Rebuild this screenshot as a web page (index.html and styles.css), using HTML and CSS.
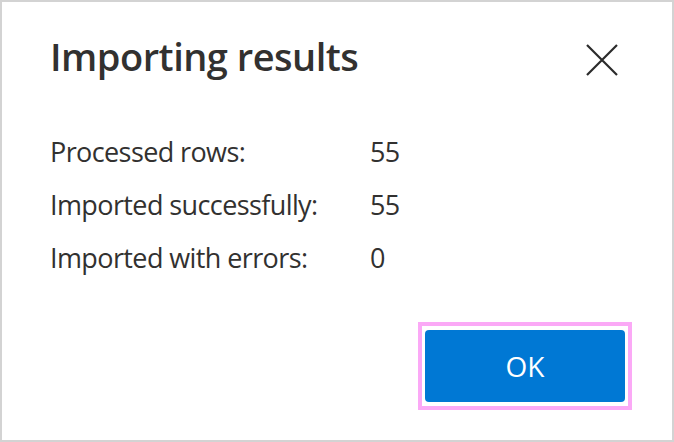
FILE: index.html
```html
<!DOCTYPE html>
<html lang="en">

<head>
    <meta charset="UTF-8">
    <meta name="viewport" content="width=device-width, initial-scale=1.0">
    <title>Importing results</title>
    <link rel="stylesheet" href="styles.css">
</head>

<body>
    <div class="dialog">
        <div class="header">
            <h2>Importing results</h2>
            <button class="close" aria-label="Close">
                <svg width="32" height="32" viewBox="0 0 32 32">
                    <path d="M1 1 L31 31 M31 1 L1 31" stroke="#2b2b2b" stroke-width="2.2" fill="none" />
                </svg>
            </button>
        </div>
        <div class="stats">
            <div class="label">Processed rows:</div>
            <div class="value">55</div>
            <div class="label">Imported successfully:</div>
            <div class="value">55</div>
            <div class="label">Imported with errors:</div>
            <div class="value">0</div>
        </div>
        <div class="footer">
            <div class="focus-ring">
                <button class="ok">OK</button>
            </div>
        </div>
    </div>
</body>

</html>
```

FILE: styles.css
```css
body {
    margin: 0;
    font-family: "Open Sans", "Noto Sans", sans-serif;
    color: #323130;
    background: white;
}

.dialog {
    width: 674px;
    height: 442px;
    box-sizing: border-box;
    border: 2px solid #d3d3d3;
    padding: 34px 40px 30px 48px;
    display: flex;
    flex-direction: column;
}

.header {
    display: flex;
    justify-content: space-between;
    align-items: flex-start;
    height: 40px;
}

.header h2 {
    margin: 0;
    font-size: 38px;
    line-height: 40px;
    font-weight: 600;
    letter-spacing: -0.5px;
}

.close {
    border: none;
    background: none;
    padding: 0;
    margin: 8px 14px 0 0;
    width: 32px;
    height: 32px;
    cursor: pointer;
}

.close svg {
    display: block;
}

.stats {
    display: grid;
    grid-template-columns: 320px auto;
    margin-top: 49px;
    font-size: 27px;
    line-height: 53px;
    letter-spacing: -0.6px;
}

.footer {
    margin-top: auto;
    display: flex;
    justify-content: flex-end;
}

/* keyboard focus indicator around the primary button */
.focus-ring {
    border: 4px solid #fba9f6;
    padding: 4px 3px;
}

.ok {
    display: block;
    width: 200px;
    height: 72px;
    border: none;
    border-radius: 4px;
    background: #0078d4;
    color: white;
    font-family: "Open Sans", "Noto Sans", sans-serif;
    font-size: 28px;
    cursor: pointer;
}
```
